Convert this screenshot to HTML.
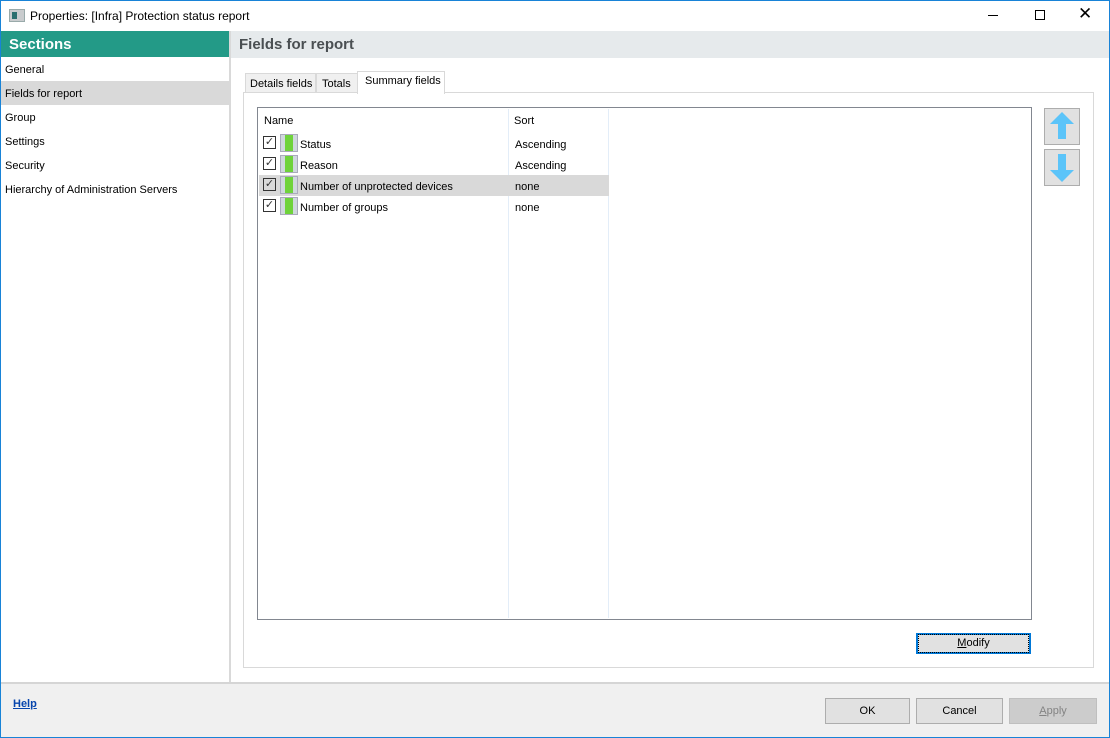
<!DOCTYPE html>
<html><head><style>
*{margin:0;padding:0;box-sizing:border-box}
body{width:1110px;height:738px;overflow:hidden;font-family:"Liberation Sans",sans-serif;font-size:11px;color:#000;background:#fff;position:relative}
.a{position:absolute;white-space:nowrap}
</style></head><body>
<div class="a" style="left:0;top:0;width:1110px;height:738px;border:1px solid #1883d7"></div>
<div class="a" style="left:9px;top:9px;width:16px;height:13px;background:#c9ccce;border:1px solid #9aa"></div>
<div class="a" style="left:12px;top:12px;width:5px;height:7px;background:#2a6f6f"></div>
<div class="a" style="left:30px;top:9px;font-size:12px">Properties: [Infra] Protection status report</div>
<div class="a" style="left:988px;top:15px;width:10px;height:1px;background:#000"></div>
<div class="a" style="left:1035px;top:10px;width:10px;height:10px;border:1px solid #000"></div>
<div class="a" style="left:1078px;top:4px;font-size:17px;line-height:20px">✕</div>
<div class="a" style="left:1px;top:31px;width:228px;height:26px;background:#239a87;color:#fff;font-weight:bold;font-size:15px;padding:5px 0 0 8px">Sections</div>
<div class="a" style="left:229px;top:31px;width:2px;height:652px;background:#d9d9d9"></div>
<div class="a" style="left:1px;top:81px;width:228px;height:24px;background:#d9d9d9"></div>
<div class="a" style="left:5px;top:58px;line-height:24px">General<br>Fields for report<br>Group<br>Settings<br>Security<br>Hierarchy of Administration Servers</div>
<div class="a" style="left:231px;top:31px;width:878px;height:27px;background:#e6eaec;color:#4a4f52;font-weight:bold;font-size:15px;padding:5px 0 0 8px">Fields for report</div>
<div class="a" style="left:245px;top:73px;width:71px;height:20px;background:#f0f0f0;border:1px solid #d9d9d9;padding:4px 0 0 4px">Details fields</div>
<div class="a" style="left:316px;top:73px;width:42px;height:20px;background:#f0f0f0;border:1px solid #d9d9d9;padding:4px 0 0 5px">Totals</div>
<div class="a" style="left:243px;top:92px;width:851px;height:576px;border:1px solid #d9d9d9"></div>
<div class="a" style="left:357px;top:71px;width:88px;height:23px;background:#fff;border:1px solid #d9d9d9;border-bottom:none;padding:3px 0 0 7px">Summary fields</div>
<div class="a" style="left:257px;top:107px;width:775px;height:513px;border:1px solid #828790"></div>
<div class="a" style="left:508px;top:109px;width:1px;height:509px;background:#e3edf8"></div>
<div class="a" style="left:608px;top:109px;width:1px;height:509px;background:#e3edf8"></div>
<div class="a" style="left:264px;top:115px">Name</div>
<div class="a" style="left:514px;top:115px">Sort</div>
<div class="a" style="left:259px;top:175px;width:350px;height:21px;background:#d9d9d9"></div>
<div class="a" style="left:263px;top:136px;width:13px;height:13px;border:1px solid #333;font-size:11px;line-height:11px;text-align:center;color:#333">✓</div>
<div class="a" style="left:263px;top:157px;width:13px;height:13px;border:1px solid #333;font-size:11px;line-height:11px;text-align:center;color:#333">✓</div>
<div class="a" style="left:263px;top:178px;width:13px;height:13px;border:1px solid #333;font-size:11px;line-height:11px;text-align:center;color:#333">✓</div>
<div class="a" style="left:263px;top:199px;width:13px;height:13px;border:1px solid #333;font-size:11px;line-height:11px;text-align:center;color:#333">✓</div>
<div class="a" style="left:280px;top:134px;width:18px;height:18px;background:#cfd8dc;border:1px solid #aab"><div style="margin-left:4px;width:8px;height:16px;background:#6fd33b"></div></div>
<div class="a" style="left:280px;top:155px;width:18px;height:18px;background:#cfd8dc;border:1px solid #aab"><div style="margin-left:4px;width:8px;height:16px;background:#6fd33b"></div></div>
<div class="a" style="left:280px;top:176px;width:18px;height:18px;background:#cfd8dc;border:1px solid #aab"><div style="margin-left:4px;width:8px;height:16px;background:#6fd33b"></div></div>
<div class="a" style="left:280px;top:197px;width:18px;height:18px;background:#cfd8dc;border:1px solid #aab"><div style="margin-left:4px;width:8px;height:16px;background:#6fd33b"></div></div>
<div class="a" style="left:300px;top:135px;line-height:21px">Status<br>Reason<br>Number of unprotected devices<br>Number of groups</div>
<div class="a" style="left:515px;top:135px;line-height:21px">Ascending<br>Ascending<br>none<br>none</div>
<div class="a" style="left:1044px;top:108px;width:36px;height:37px;background:#e1e1e1;border:1px solid #adadad">
<svg width="34" height="35"><path d="M17 3 L5 15 H13 V30 H21 V15 H29 Z" fill="#5bc4f9"/></svg></div>
<div class="a" style="left:1044px;top:149px;width:36px;height:37px;background:#e1e1e1;border:1px solid #adadad">
<svg width="34" height="35"><path d="M17 32 L5 20 H13 V4 H21 V20 H29 Z" fill="#5bc4f9"/></svg></div>
<div class="a" style="left:916px;top:633px;width:115px;height:21px;background:#e1e1e1;border:1px solid #0078d7;box-shadow:inset 0 0 0 1px #0078d7;text-align:center;line-height:19px"><span style="outline:1px dotted #000;outline-offset:2px;display:inline-block;width:105px;line-height:13px"><u>M</u>odify</span></div>
<div class="a" style="left:1px;top:682px;width:1108px;height:2px;background:#d5d5d5"></div>
<div class="a" style="left:1px;top:684px;width:1108px;height:53px;background:#f0f0f0"></div>
<div class="a" style="left:13px;top:698px;color:#0645ad;font-weight:bold;text-decoration:underline">Help</div>
<div class="a" style="left:825px;top:698px;width:85px;height:26px;background:#e1e1e1;border:1px solid #adadad;text-align:center;line-height:24px">OK</div>
<div class="a" style="left:916px;top:698px;width:87px;height:26px;background:#e1e1e1;border:1px solid #adadad;text-align:center;line-height:24px">Cancel</div>
<div class="a" style="left:1009px;top:698px;width:88px;height:26px;background:#cccccc;border:1px solid #bfbfbf;color:#838383;text-align:center;line-height:24px"><u>A</u>pply</div>
</body></html>
